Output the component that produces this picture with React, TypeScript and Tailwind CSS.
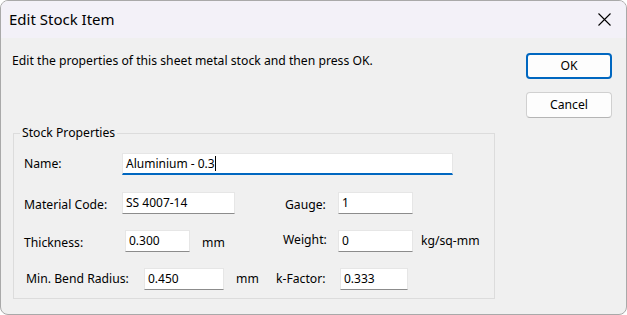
import React from "react";

const font = { fontFamily: '"Noto Sans", "Open Sans", sans-serif' };

function Field({ value, className = "", active = false }: { value: string; className?: string; active?: boolean }) {
  return (
    <div
      className={`h-[22px] bg-white flex items-center pl-[3px] text-[12px] text-black border border-[#e6e6e6] ${
        active ? "border-b-2 border-b-[#0067c0]" : "border-b-[#8c8c8c]"
      } ${className}`}
    >
      {value}
      {active && <span className="w-px h-[15px] bg-black" />}
    </div>
  );
}

export default function App() {
  return (
    <div className="w-[627px] h-[315px] bg-white" style={font}>
      <div className="h-full rounded-[8px] border border-[#a9a9a9] overflow-hidden flex flex-col bg-[#f0f0f0] text-black">
        {/* title bar */}
        <div className="h-[37px] bg-[#f3f1f8] flex items-center justify-between pl-[8px] pr-[15px] shrink-0">
          <span className="text-[15px] leading-none">Edit Stock Item</span>
          <svg width="13" height="13" viewBox="0 0 13 13" className="text-black">
            <path d="M0.5 0.5 L12.5 12.5 M12.5 0.5 L0.5 12.5" stroke="currentColor" strokeWidth="1.1" fill="none" />
          </svg>
        </div>

        <div className="flex justify-between flex-1">
          <div className="pl-[11px] pt-[15px]">
            <p className="text-[12.2px] leading-[16px]">Edit the properties of this sheet metal stock and then press OK.</p>

            <fieldset className="mt-[56px] ml-[1px] w-[482px] h-[174px] border border-[#dcdcdc] pb-[8px]">
              <legend className="ml-[6px] px-[2px] text-[12.2px] leading-[16px]">Stock Properties</legend>

              <div className="flex flex-col gap-[16px] text-[12.2px] pt-[12px]">
                <div className="flex items-center">
                  <span className="ml-[10px] w-[98px]">Name:</span>
                  <Field value="Aluminium - 0.3" active className="w-[331px]" />
                </div>

                <div className="flex items-center mt-[1px]">
                  <span className="ml-[10px] w-[98px] mt-[4px]">Material Code:</span>
                  <Field value="SS 4007-14" className="w-[113px]" />
                  <span className="ml-[50px] w-[53px] mt-[4px]">Gauge:</span>
                  <Field value="1" className="w-[75px]" />
                </div>

                <div className="flex items-center">
                  <span className="ml-[10px] w-[101px] mt-[3px]">Thickness:</span>
                  <Field value="0.300" className="w-[65px]" />
                  <span className="ml-[12px] w-[81px] mt-[3px]">mm</span>
                  <span className="w-[55px] -mt-[3px]">Weight:</span>
                  <Field value="0" className="w-[75px]" />
                  <span className="ml-[8px]">kg/sq-mm</span>
                </div>

                <div className="flex items-center">
                  <span className="ml-[12px] w-[118px]">Min. Bend Radius:</span>
                  <Field value="0.450" className="w-[80px]" />
                  <span className="ml-[12px] w-[40px]">mm</span>
                  <span className="w-[64px]">k-Factor:</span>
                  <Field value="0.333" className="w-[68px]" />
                </div>
              </div>
            </fieldset>
          </div>

          <div className="flex flex-col gap-[13px] pt-[15px] pr-[14px] text-[12.2px]">
            <button className="w-[86px] h-[26px] rounded-[4px] bg-[#fdfdfd] border-2 border-[#0067c0] flex items-center justify-center">
              OK
            </button>
            <button className="w-[86px] h-[26px] rounded-[4px] bg-[#fdfdfd] border border-[#d0d0d0] border-b-[#b5b5b5] flex items-center justify-center">
              Cancel
            </button>
          </div>
        </div>
      </div>
    </div>
  );
}
